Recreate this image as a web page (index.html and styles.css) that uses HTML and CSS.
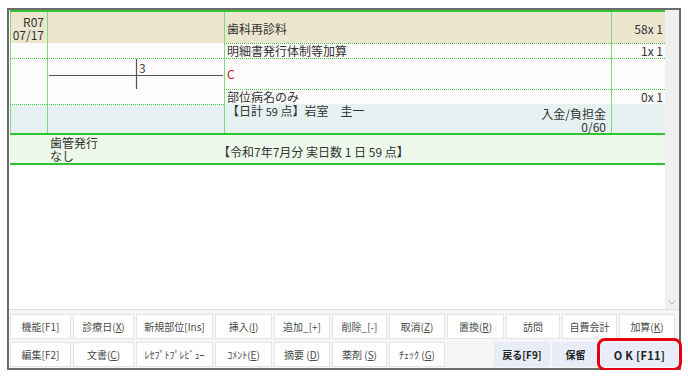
FILE: index.html
```html
<!DOCTYPE html>
<html lang="ja">
<head>
    <meta charset="UTF-8">
    <meta name="viewport" content="width=device-width, initial-scale=1.0">
    <title>診療行為入力</title>
    <link rel="stylesheet" href="styles.css">
</head>
<body>

    <div class="window">

        <!-- Visit list -->
        <div class="list">
            <div class="sheet">
                <div class="visit">
                    <div class="cell date beige">R07<br>07/17</div>
                    <div class="cell beige"></div>
                    <div class="cell item beige head">歯科再診料</div>
                    <div class="cell count beige head">58x 1</div>

                    <div class="cell"></div>
                    <div class="cell"></div>
                    <div class="cell item dot">明細書発行体制等加算</div>
                    <div class="cell count dot">1x 1</div>

                    <div class="cell dot tall"></div>
                    <div class="cell dot tall chart">
                        <svg width="176" height="45" viewBox="0 0 176 45">
                            <line x1="1" y1="16.5" x2="175" y2="16.5" stroke="#555" stroke-width="1.2"/>
                            <line x1="88.5" y1="0" x2="88.5" y2="30" stroke="#555" stroke-width="1.2"/>
                            <text x="91" y="14" font-size="12" fill="#444" font-family="Noto Sans CJK JP, sans-serif">3</text>
                        </svg>
                    </div>
                    <div class="cell item dot code">C</div>
                    <div class="cell count dot"></div>
                    <div class="cell item dot">部位病名のみ</div>
                    <div class="cell count dot">0x 1</div>

                    <div class="cell teal dot"></div>
                    <div class="cell teal dot"></div>
                    <div class="cell teal total">
                        <span class="day-total">【日計 <small>59</small> 点】岩室　圭一</span>
                        <span class="paid">入金/負担金<br>0/60</span>
                    </div>
                    <div class="cell teal"></div>
                </div>

                <div class="summary">
                    <div></div>
                    <div class="note">歯管発行<br>なし</div>
                    <div class="month">【令和7年7月分 実日数 1 日 59 点】</div>
                </div>
            </div>

            <div class="scrollbar">
                <svg width="8" height="5" viewBox="0 0 8 5">
                    <polyline points="0.5,0.5 4,4 7.5,0.5" fill="none" stroke="#a8a8a8" stroke-width="1"/>
                </svg>
            </div>
        </div>

        <!-- Function keys -->
        <div class="toolbar">
            <div class="keys">
                <button>機能[F1]</button>
                <button>診療日(<u>X</u>)</button>
                <button>新規部位[Ins]</button>
                <button>挿入(<u>I</u>)</button>
                <button>追加_[+]</button>
                <button>削除_[-]</button>
                <button>取消(<u>Z</u>)</button>
                <button>置換(<u>R</u>)</button>
                <button>訪問</button>
                <button>自費会計</button>
                <button>加算(<u>K</u>)</button>
            </div>
            <div class="keys">
                <button>編集[F2]</button>
                <button>文書(<u>C</u>)</button>
                <button>ﾚｾﾌﾟﾄﾌﾟﾚﾋﾞｭｰ</button>
                <button>ｺﾒﾝﾄ(<u>E</u>)</button>
                <button>摘要 (<u>D</u>)</button>
                <button>薬剤 (<u>S</u>)</button>
                <button>ﾁｪｯｸ (<u>G</u>)</button>
                <div class="actions">
                    <button class="main back">戻る[F9]</button>
                    <button class="main hold">保留</button>
                    <button class="main ok">O K [F11]</button>
                </div>
            </div>
        </div>

    </div>

</body>
</html>
```

FILE: styles.css
```css
body {
    margin: 0;
    background: #fff;
    color: #333;
    font-family: "Noto Sans CJK JP", sans-serif;
    font-size: 12px;
}

.window {
    margin: 8px 0 0 7px;
    width: 670px;
    height: 358px;
    border: 2px solid #6c6c6c;
    background: #fff;
}

/* List area */
.list {
    display: flex;
    height: 299px;
    border-bottom: 1px solid #dedede;
}

.sheet {
    flex: 1;
    padding-left: 1px;
}

.visit {
    display: grid;
    grid-template-columns: 37px 177px 387px 54px;
    grid-template-rows: 31px 15px 31px 15px 29px;
    border-top: 2px solid #2fc42f;
    border-bottom: 2px solid #2fc42f;
}

.cell {
    box-sizing: border-box;
    border-left: 1px solid #7fda7f;
    background: #fdfbfb;
    line-height: 14px;
    white-space: nowrap;
}

.beige {
    background: #ece6cf;
}

.teal {
    background: #e5f2f1;
}

.dot {
    border-top: 1px dotted #44c944;
}

.tall {
    grid-row: span 2;
}

.date {
    text-align: right;
    padding-right: 3px;
    line-height: 13px;
    padding-top: 3px;
}

.item {
    padding-left: 2px;
}

.head {
    padding-top: 10px;
}

.count {
    text-align: right;
    padding-right: 2px;
}

.code {
    color: #c4161c;
    padding-top: 8px;
}

.chart svg {
    display: block;
}

.total {
    display: flex;
    justify-content: space-between;
    padding: 0 5px 0 2px;
    line-height: 13px;
}

.total small {
    font-size: 11px;
}

.paid {
    text-align: right;
    padding-top: 3px;
}

.summary {
    display: grid;
    grid-template-columns: 37px 177px 1fr;
    height: 28px;
    background: #edf9ea;
    border-bottom: 2px solid #2fc42f;
}

.note {
    padding: 1px 0 0 3px;
    line-height: 13px;
}

.month {
    padding-top: 10px;
    line-height: 14px;
    margin-left: -6px;
}

.scrollbar {
    width: 14px;
    background: #f0f0f0;
    display: flex;
    flex-direction: column;
    justify-content: flex-end;
    align-items: center;
    padding-bottom: 4px;
    box-sizing: border-box;
}

.scrollbar svg {
    display: block;
}

/* Function keys */
.toolbar {
    padding: 4px 0 0 1px;
    display: flex;
    flex-direction: column;
    gap: 3px;
    background: #f6f6f6;
    height: 58px;
    box-sizing: border-box;
}

.keys {
    display: grid;
    grid-template-columns: 61px 61px 77px 57px 56px 55px 56px 57px 54px 55px 56px;
    column-gap: 2px;
    height: 25px;
}

button {
    font-family: "Noto Sans CJK JP", sans-serif;
    font-size: 10px;
    color: #4a4a4a;
    background: #fff;
    border: 1px solid #e4e4e4;
    padding: 0;
    white-space: nowrap;
}

.actions {
    grid-column: 8 / 12;
    display: flex;
    justify-content: flex-end;
    gap: 2px;
    margin-right: -3px;
}

.main {
    font-weight: bold;
    color: #222;
    background: #e7edf8;
    border-color: #e7edf8;
}

.back {
    width: 56px;
}

.hold {
    width: 47px;
}

.ok {
    width: 77px;
    font-size: 11px;
    letter-spacing: 0.3px;
    border-radius: 4px;
    outline: 3px solid #e3000f;
    outline-offset: 1px;
}
```
